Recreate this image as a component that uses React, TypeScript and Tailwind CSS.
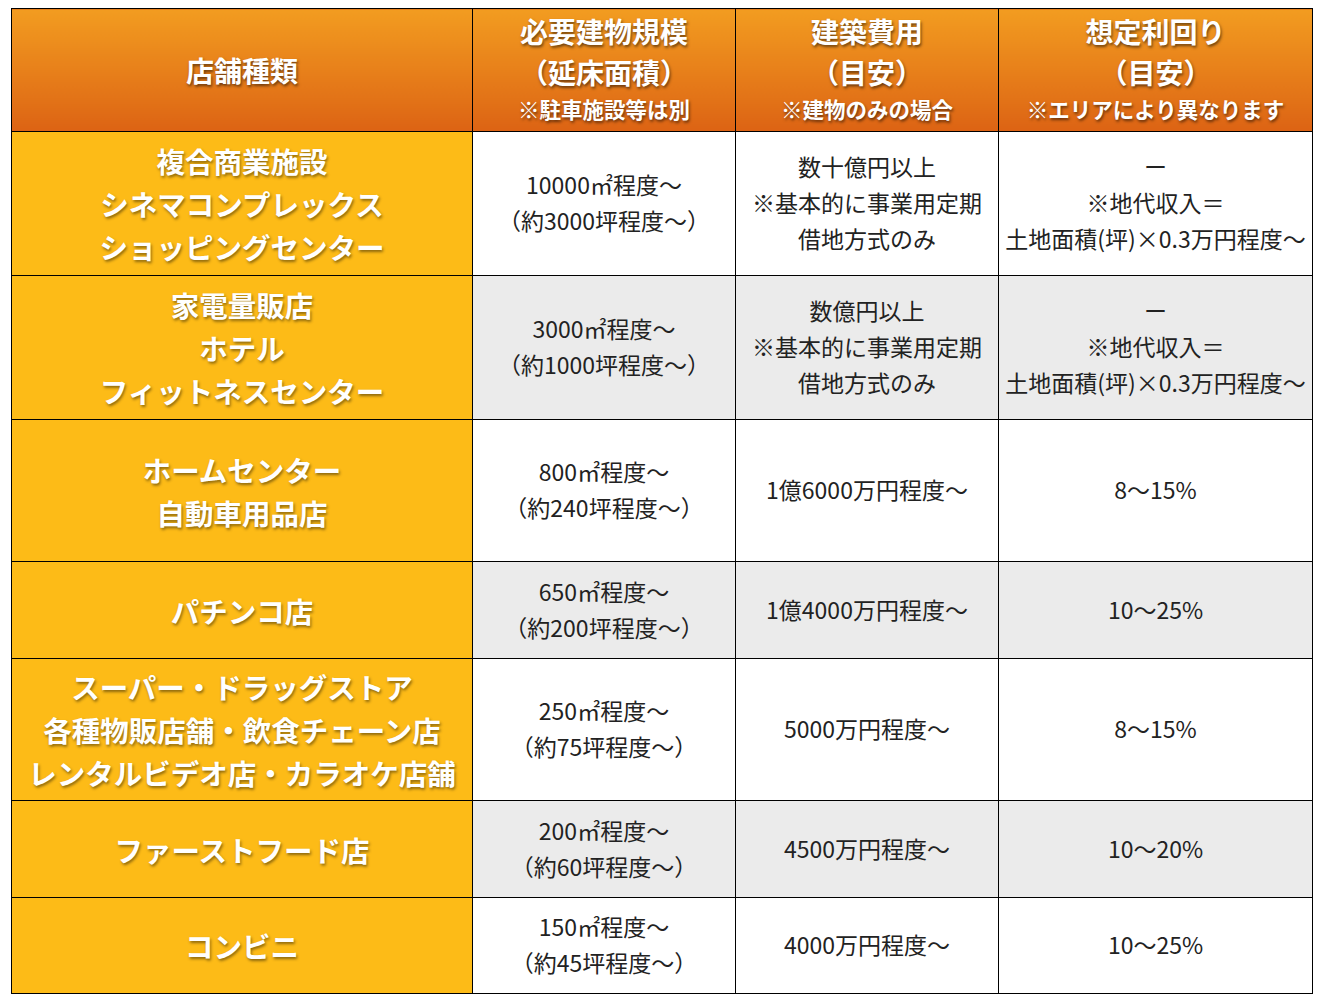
import React from 'react';

type Row = {
  kind: string[];
  size: string[];
  cost: string[];
  yield: string[];
  height: string;
  grey: boolean;
};

const rows: Row[] = [
  {
    kind: ['複合商業施設', 'シネマコンプレックス', 'ショッピングセンター'],
    size: ['10000㎡程度～', '（約3000坪程度～）'],
    cost: ['数十億円以上', '※基本的に事業用定期', '借地方式のみ'],
    yield: ['ー', '※地代収入＝', '土地面積(坪)×0.3万円程度～'],
    height: 'h-[144px]',
    grey: false,
  },
  {
    kind: ['家電量販店', 'ホテル', 'フィットネスセンター'],
    size: ['3000㎡程度～', '（約1000坪程度～）'],
    cost: ['数億円以上', '※基本的に事業用定期', '借地方式のみ'],
    yield: ['ー', '※地代収入＝', '土地面積(坪)×0.3万円程度～'],
    height: 'h-[144px]',
    grey: true,
  },
  {
    kind: ['ホームセンター', '自動車用品店'],
    size: ['800㎡程度～', '（約240坪程度～）'],
    cost: ['1億6000万円程度～'],
    yield: ['8～15%'],
    height: 'h-[142px]',
    grey: false,
  },
  {
    kind: ['パチンコ店'],
    size: ['650㎡程度～', '（約200坪程度～）'],
    cost: ['1億4000万円程度～'],
    yield: ['10～25%'],
    height: 'h-[97px]',
    grey: true,
  },
  {
    kind: ['スーパー・ドラッグストア', '各種物販店舗・飲食チェーン店', 'レンタルビデオ店・カラオケ店舗'],
    size: ['250㎡程度～', '（約75坪程度～）'],
    cost: ['5000万円程度～'],
    yield: ['8～15%'],
    height: 'h-[142px]',
    grey: false,
  },
  {
    kind: ['ファーストフード店'],
    size: ['200㎡程度～', '（約60坪程度～）'],
    cost: ['4500万円程度～'],
    yield: ['10～20%'],
    height: 'h-[97px]',
    grey: true,
  },
  {
    kind: ['コンビニ'],
    size: ['150㎡程度～', '（約45坪程度～）'],
    cost: ['4000万円程度～'],
    yield: ['10～25%'],
    height: 'h-[96px]',
    grey: false,
  },
];

const headers = [
  { main: ['店舗種類'], note: '' },
  { main: ['必要建物規模', '（延床面積）'], note: '※駐車施設等は別' },
  { main: ['建築費用', '（目安）'], note: '※建物のみの場合' },
  { main: ['想定利回り', '（目安）'], note: '※エリアにより異なります' },
];

const Lines = ({ lines }: { lines: string[] }) => (
  <>
    {lines.map((l, i) => (
      <div key={i} className="whitespace-nowrap">{l}</div>
    ))}
  </>
);

export default function App() {
  return (
    <div className="bg-white min-h-[1000px] pt-[8px] pl-[11px] font-['Noto_Sans_CJK_JP',sans-serif]">
      <table className="table-fixed border-collapse w-[1301px]">
        <colgroup>
          <col className="w-[461px]" />
          <col className="w-[263px]" />
          <col className="w-[263px]" />
          <col className="w-[314px]" />
        </colgroup>
        <thead>
          <tr className="h-[123px]">
            {headers.map((h, i) => (
              <th
                key={i}
                className="border border-black bg-gradient-to-b from-[#f29c20] to-[#dc6314] text-white text-center align-middle p-0 [text-shadow:1px_2px_3px_rgba(0,0,0,0.55)]"
              >
                <div className={`text-[28px] font-bold leading-[41px] ${h.note ? '-mt-[4px]' : ''}`}>
                  <Lines lines={h.main} />
                </div>
                {h.note && <div className="text-[21.5px] font-bold leading-[32px]">{h.note}</div>}
              </th>
            ))}
          </tr>
        </thead>
        <tbody>
          {rows.map((r, i) => (
            <tr key={i} className={r.height}>
              <td className="border border-black bg-[#fdbb17] text-white text-center align-middle p-0 text-[28.5px] font-bold leading-[43px] [text-shadow:1px_2px_3px_rgba(0,0,0,0.45)]">
                <Lines lines={r.kind} />
              </td>
              {[r.size, r.cost, r.yield].map((c, j) => (
                <td
                  key={j}
                  className={`border border-black text-center align-middle p-0 pb-[3px] text-[23px] leading-[36px] text-[#222] ${r.grey ? 'bg-[#ebebeb]' : 'bg-white'}`}
                >
                  <Lines lines={c} />
                </td>
              ))}
            </tr>
          ))}
        </tbody>
      </table>
    </div>
  );
}
